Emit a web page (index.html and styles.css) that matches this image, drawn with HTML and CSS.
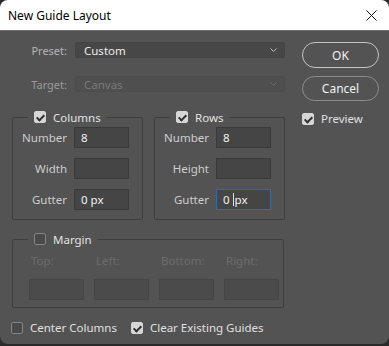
FILE: index.html
```html
<!DOCTYPE html>
<html lang="en">
<head>
    <meta charset="UTF-8">
    <title>New Guide Layout</title>
    <link rel="stylesheet" href="styles.css">
</head>
<body>
    <div class="dialog">
        <div class="titlebar">
            <span class="title">New Guide Layout</span>
            <svg class="close" width="11" height="11" viewBox="0 0 11 11">
                <path d="M0.5 0.5L10.5 10.5M10.5 0.5L0.5 10.5" stroke="#111" stroke-width="1"/>
            </svg>
        </div>
        <div class="content">
            <div class="top">
                <div class="main">
                    <div class="field-row">
                        <span class="row-label">Preset:</span>
                        <div class="select">
                            <span>Custom</span>
                            <svg class="chevron" width="7" height="4" viewBox="0 0 7 4"><path d="M0.5 0.5L3.5 3.5L6.5 0.5" fill="none" stroke="#bdbdbd"/></svg>
                        </div>
                    </div>
                    <div class="field-row disabled">
                        <span class="row-label">Target:</span>
                        <div class="select">
                            <span>Canvas</span>
                            <svg class="chevron" width="7" height="4" viewBox="0 0 7 4"><path d="M0.5 0.5L3.5 3.5L6.5 0.5" fill="none" stroke="#6a6a6a"/></svg>
                        </div>
                    </div>

                    <div class="groups">
                        <fieldset class="group">
                            <legend><span class="check on"></span>Columns</legend>
                            <div class="grid-row"><span class="lbl">Number</span><div class="input">8</div></div>
                            <div class="grid-row"><span class="lbl">Width</span><div class="input"></div></div>
                            <div class="grid-row"><span class="lbl">Gutter</span><div class="input">0 px</div></div>
                        </fieldset>
                        <fieldset class="group">
                            <legend><span class="check on"></span>Rows</legend>
                            <div class="grid-row"><span class="lbl">Number</span><div class="input">8</div></div>
                            <div class="grid-row"><span class="lbl">Height</span><div class="input"></div></div>
                            <div class="grid-row"><span class="lbl">Gutter</span><div class="input focus">0&nbsp;<span class="caret"></span>px</div></div>
                        </fieldset>
                    </div>

                    <fieldset class="margin">
                        <legend><span class="check"></span>Margin</legend>
                        <div class="margin-cols">
                            <div class="margin-col"><span>Top:</span><div class="input off"></div></div>
                            <div class="margin-col"><span>Left:</span><div class="input off"></div></div>
                            <div class="margin-col"><span>Bottom:</span><div class="input off"></div></div>
                            <div class="margin-col"><span>Right:</span><div class="input off"></div></div>
                        </div>
                    </fieldset>
                </div>

                <div class="side">
                    <button class="btn default">OK</button>
                    <button class="btn">Cancel</button>
                    <label class="option"><span class="check on"></span>Preview</label>
                </div>
            </div>

            <div class="bottom">
                <label class="option"><span class="check"></span>Center Columns</label>
                <label class="option"><span class="check on"></span>Clear Existing Guides</label>
            </div>
        </div>
    </div>
</body>
</html>
```

FILE: styles.css
```css
html, body {
    margin: 0;
    padding: 0;
    background: #2a2a2a;
}

body {
    font-family: "Noto Sans", "Open Sans", sans-serif;
    font-size: 11px;
    color: #d4d4d4;
}

.dialog {
    width: 389px;
    height: 344px;
    background: #535353;
    border-radius: 8px;
    overflow: hidden;
    display: flex;
    flex-direction: column;
}

.titlebar {
    height: 30px;
    background: #ffffff;
    border-bottom: 1px solid #6e6e6e;
    display: flex;
    align-items: center;
    padding: 0 12px 0 8px;
    flex-shrink: 0;
}

.title {
    color: #000;
    font-size: 12px;
}

.close {
    margin-left: auto;
}

.content {
    padding: 11px 10px 0 12px;
}

.top {
    display: flex;
    gap: 17px;
}

.main {
    width: 273px;
}

/* Preset / Target */
.field-row {
    display: flex;
    align-items: center;
    gap: 8px;
    margin-bottom: 18px;
}

.row-label {
    width: 55px;
    text-align: right;
    color: #b4b4b4;
}

.select {
    flex: 1;
    height: 14px;
    background: #474747;
    border: 1px solid #444;
    border-radius: 2px;
    display: flex;
    align-items: center;
    padding: 0 7px 0 8px;
    color: #ececec;
    font-size: 11.5px;
}

.chevron {
    margin-left: auto;
}

.disabled .row-label {
    color: #9a9a9a;
}

.disabled .select {
    background: #4f4f4f;
    border-color: #4c4c4c;
    color: #7a7a7a;
}

/* Group boxes */
.groups {
    display: flex;
    gap: 11px;
    margin-top: 1px;
}

fieldset {
    margin: 0;
    border: 1px solid #3e3e3e;
    border-radius: 2px;
}

legend {
    margin-left: 15px;
    padding: 0 6px;
    display: flex;
    align-items: center;
    gap: 7px;
    color: #e2e2e2;
    height: 14px;
    font-size: 11.5px;
}

.group {
    width: 129px;
    padding: 3px 0 9px 0;
}

.grid-row {
    display: flex;
    align-items: center;
    gap: 7px;
    margin-bottom: 10px;
}

.grid-row:last-child {
    margin-bottom: 0;
}

.lbl {
    width: 54px;
    text-align: right;
    color: #cdcdcd;
    font-size: 11.5px;
}

.input {
    width: 47px;
    height: 19px;
    background: #454545;
    border: 1px solid #3a3a3a;
    display: flex;
    align-items: center;
    padding-left: 6px;
    color: #f2f2f2;
    font-size: 11.5px;
}

.input.focus {
    border-color: #1a6fd6;
}

.caret {
    display: inline-block;
    width: 1px;
    height: 13px;
    background: #e0e0e0;
    margin-right: 1px;
}

/* Margin box */
.margin {
    margin-top: 12px;
    width: 254px;
    padding: 7px 0 7px 16px;
}

.margin legend {
    margin-left: -1px;
}

.margin-cols {
    display: flex;
    gap: 10px;
}

.margin-col {
    display: flex;
    flex-direction: column;
    gap: 11px;
    color: #6c6c6c;
    font-size: 11.5px;
}

.margin-col span {
    padding-left: 2px;
}

.input.off {
    background: #4b4b4b;
    border-color: #464646;
}

/* Checkboxes */
.check {
    width: 10px;
    height: 10px;
    border: 1px solid #858585;
    border-radius: 2px;
    background: #4a4a4a;
    display: inline-block;
    position: relative;
    flex-shrink: 0;
}

.check.on {
    background: #d6d6d6;
    border-color: #d6d6d6;
}

.check.on::after {
    content: "";
    position: absolute;
    left: 3px;
    top: 1px;
    width: 3px;
    height: 6px;
    border: solid #2e2e2e;
    border-width: 0 2px 2px 0;
    transform: rotate(45deg);
}

/* Right column */
.side {
    width: 77px;
    display: flex;
    flex-direction: column;
    gap: 8px;
}

.btn {
    font-family: inherit;
    font-size: 12px;
    color: #f0f0f0;
    background: transparent;
    border: 1px solid #8c8c8c;
    border-radius: 13px;
    height: 25px;
    padding: 0;
}

.btn.default {
    height: 26px;
    border: 1.5px solid #c4c4c4;
}

.option {
    display: flex;
    align-items: center;
    gap: 7px;
    color: #e0e0e0;
    font-size: 11.5px;
}

.side .option {
    margin-top: 2px;
}

.bottom {
    display: flex;
    gap: 14px;
    margin-top: 12px;
    margin-left: -1px;
}
```
